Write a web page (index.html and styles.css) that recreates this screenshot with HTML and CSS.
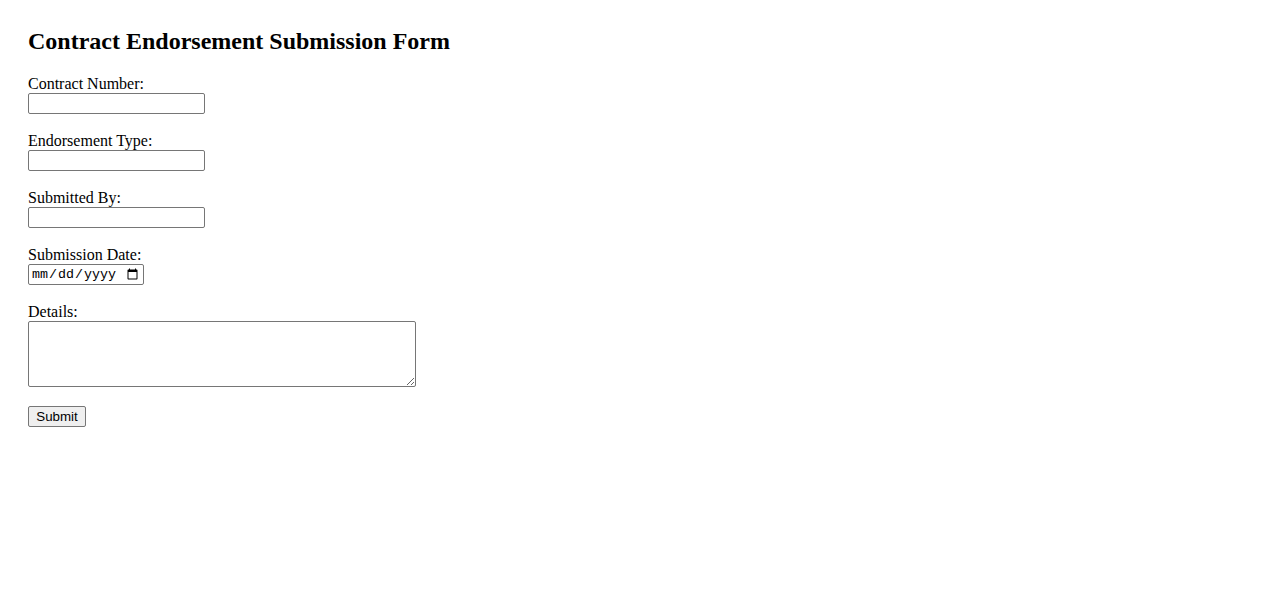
FILE: index.html
```html
<!DOCTYPE html>
<html lang="en">
<head>
<meta charset="utf-8">
<title>Contract Endorsement Submission Form</title>
<link rel="stylesheet" href="styles.css">
</head>
<body class="page">
<h2 class="title">Contract Endorsement Submission Form</h2>
<form class="form">
<label class="label" for="contractNumber">Contract Number:</label><br>
<input class="text-input" type="text" id="contractNumber" name="contractNumber"><br><br>
<label class="label" for="endorsementType">Endorsement Type:</label><br>
<input class="text-input" type="text" id="endorsementType" name="endorsementType"><br><br>
<label class="label" for="submittedBy">Submitted By:</label><br>
<input class="text-input" type="text" id="submittedBy" name="submittedBy"><br><br>
<label class="label" for="submissionDate">Submission Date:</label><br>
<input class="date-input" type="date" id="submissionDate" name="submissionDate"><br><br>
<label class="label" for="details">Details:</label><br>
<textarea class="details" id="details" name="details"></textarea><br><br>
<input class="submit" type="submit" value="Submit">
</form>
</body>
</html>
```
FILE: styles.css
```css
html {
  background: #ffffff;
}
.page {
  margin: 0;
  padding: 28px;
  font-family: "Liberation Serif", "Times New Roman", serif;
  font-size: 16px;
  color: #000;
}
.title {
  font-size: 24px;
  font-weight: bold;
  margin: 0 0 20px;
}
.form {
  margin: 0;
}
.text-input {
  box-sizing: border-box;
  width: 177px;
  height: 21px;
  border: 1px solid #767676;
  border-radius: 2px;
  padding: 1px 2px;
  font-family: "Liberation Sans", Arial, sans-serif;
  font-size: 13.33px;
}
.date-input {
  box-sizing: border-box;
  width: 116px;
  height: 21px;
  border: 1px solid #767676;
  border-radius: 2px;
  padding: 1px 2px;
  font-family: "Liberation Mono", monospace;
  font-size: 13.33px;
}
.details {
  box-sizing: border-box;
  width: 388px;
  height: 66px;
  border: 1px solid #767676;
  border-radius: 2px;
  padding: 2px;
  vertical-align: text-bottom;
}
.submit {
  box-sizing: border-box;
  width: 58px;
  height: 21px;
  border: 1px solid #767676;
  border-radius: 2px;
  background: #efefef;
  padding: 1px 6px;
  font-family: "Liberation Sans", Arial, sans-serif;
  font-size: 13.33px;
  color: #000;
}
```
